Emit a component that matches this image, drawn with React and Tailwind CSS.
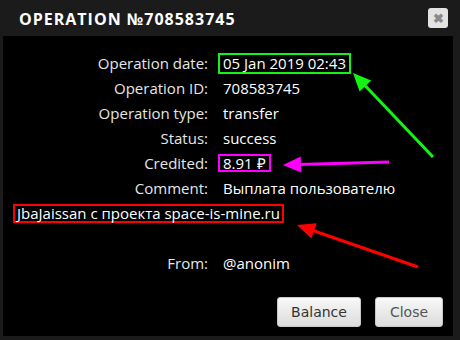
import React from 'react';

const rows = [
  { label: 'Operation date:', value: '05 Jan 2019 02:43', box: 'green' },
  { label: 'Operation ID:', value: '708583745' },
  { label: 'Operation type:', value: 'transfer' },
  { label: 'Status:', value: 'success' },
  { label: 'Credited:', value: '8.91 ₽', box: 'pink' },
  { label: 'Comment:', value: 'Выплата пользователю' },
];

function Arrow({ x1, y1, x2, y2, color }) {
  // tail (x1,y1) -> tip (x2,y2)
  const dx = x2 - x1;
  const dy = y2 - y1;
  const len = Math.hypot(dx, dy);
  const ux = dx / len;
  const uy = dy / len;
  const head = 18;
  const half = 8;
  const bx = x2 - ux * head;
  const by = y2 - uy * head;
  const pts = `${x2},${y2} ${bx - uy * half},${by + ux * half} ${bx + uy * half},${by - ux * half}`;
  return (
    <g>
      <line x1={x1} y1={y1} x2={bx + ux * 2} y2={by + uy * 2} stroke={color} strokeWidth="3" />
      <polygon points={pts} fill={color} />
    </g>
  );
}

function Row({ label, value, box }) {
  let val = <span>{value}</span>;
  if (box === 'green') {
    val = <span className="inline-block border-2 border-[#14f414] px-[3px] -ml-[5px] leading-[17px]">{value}</span>;
  }
  if (box === 'pink') {
    val = <span className="inline-block border-2 border-[#ff00ff] px-[3px] -ml-[5px] leading-[14px]">{value}</span>;
  }
  return (
    <div className="flex h-[25px] items-center">
      <div className="w-[205px] text-right text-[#e6e6e6]">{label}</div>
      <div className="pl-[15px] text-white">{val}</div>
    </div>
  );
}

export default function App() {
  return (
    <div className="relative w-[460px] h-[340px] bg-[#1b1b1b] overflow-hidden font-['Open_Sans',sans-serif]">
      <div className="flex h-9 items-center justify-between pl-[19px] pr-[12px]">
        <h1 className="text-[16px] font-bold tracking-[1px] text-white leading-none pt-0.5">OPERATION №708583745</h1>
        <button className="flex h-[20px] w-[20px] items-center justify-center rounded-[3px] bg-[#e3e3e3] text-[13px] font-bold text-[#8a8a8a] leading-none">
          ✖
        </button>
      </div>
      <div className="ml-[3px] h-[300px] w-[450px] bg-black text-[15px] flex flex-col">
        <div className="pt-[15px]">
          {rows.map((r) => (
            <Row key={r.label} {...r} />
          ))}
          <div className="flex h-[25px] items-center pl-[10px]">
            <span className="inline-block border-2 border-[#ff0000] px-[2px] leading-[15px] text-white">
              JbaJaissan с проекта space-is-mine.ru
            </span>
          </div>
          <div className="h-[25px]" />
          <Row label="From:" value="@anonim" />
        </div>
        <div className="mt-[21px] flex justify-end gap-[14px] pr-[10px]">
          <button className="h-[30px] w-[84px] rounded-[3px] border border-[#c8c8c8] bg-gradient-to-b from-[#f8f8f8] to-[#dcdcdc] text-[14px] text-[#333] font-['DejaVu_Sans',sans-serif]">
            Balance
          </button>
          <button className="h-[30px] w-[68px] rounded-[3px] border border-[#c8c8c8] bg-gradient-to-b from-[#f8f8f8] to-[#dcdcdc] text-[14px] text-[#555] font-['DejaVu_Sans',sans-serif]">
            Close
          </button>
        </div>
      </div>
      <svg className="pointer-events-none absolute inset-0" width="460" height="340">
        <Arrow x1={433} y1={157} x2={353} y2={73} color="#14f414" />
        <Arrow x1={389} y1={162} x2={283} y2={165} color="#ff00ff" />
        <Arrow x1={418} y1={267} x2={297} y2={225} color="#ff0000" />
      </svg>
    </div>
  );
}
